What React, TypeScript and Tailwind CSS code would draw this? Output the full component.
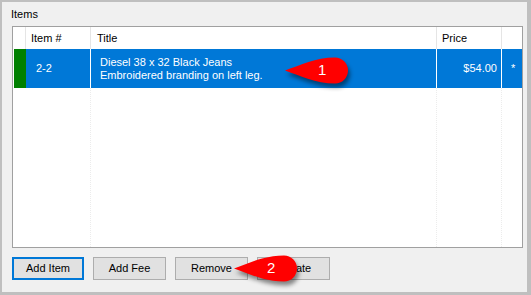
const font = { fontFamily: '"Segoe UI", "Liberation Sans", Arial, sans-serif' };

function Callout({ n, className }: { n: string; className: string }) {
  return (
    <div className={`absolute h-[27px] w-[64px] ${className}`}>
      <svg
        width="64"
        height="27"
        viewBox="0 0 64 27"
        className="absolute inset-0 overflow-visible drop-shadow-[2px_4px_2px_rgba(0,0,0,0.45)]"
      >
        <path d="M0 13.5 C 16 8, 30 0.5, 50 0.5 A 13 13 0 0 1 50 26.5 C 30 26.5, 16 19, 0 13.5 Z" fill="#ff0000" />
      </svg>
      <span className="absolute left-[33px] top-[4px] text-[15px] leading-[18px] text-white" style={{ fontFamily: '"Liberation Sans", Arial, sans-serif' }}>
        {n}
      </span>
    </div>
  );
}

function Btn({ label, focused }: { label: string; focused?: boolean }) {
  return (
    <button
      className={`h-[23px] bg-[#e1e1e1] text-[11px] text-black ${
        focused ? 'w-[72px] border-2 border-[#0078d7]' : 'w-[73px] border border-[#adadad]'
      }`}
    >
      {label}
    </button>
  );
}

export default function App() {
  return (
    <div
      className="relative h-[295px] w-[531px] border-b-[3px] border-l-2 border-r-[4px] border-t-2 border-[#bfbfbf] bg-[#f0f0f0] text-[11px] text-black"
      style={font}
    >
      <div className="pl-[9px] pt-[6px] leading-[13px]">Items</div>

      {/* list view */}
      <div className="ml-[10px] mt-[5px] flex h-[222px] w-[511px] flex-col border border-[#a0a0a0] bg-white">
        {/* header */}
        <div className="flex h-[22px] items-center">
          <div className="h-full w-[13px] border-r border-[#e5e5e5]" />
          <div className="flex h-full w-[65px] items-center border-r border-[#e5e5e5] pl-[5px]">Item #</div>
          <div className="flex h-full w-[346px] items-center border-r border-[#e5e5e5] pl-[6px]">Title</div>
          <div className="flex h-full w-[65px] items-center border-r border-[#e5e5e5] pl-[5px]">Price</div>
          <div className="h-full flex-1" />
        </div>

        {/* selected row */}
        <div className="flex h-[39px] bg-[#0078d7] text-white">
          <div className="h-full w-[13px] bg-white pl-px">
            <div className="h-full w-[12px] bg-[#008000]" />
          </div>
          <div className="flex h-full w-[65px] items-center border-r border-white pl-[10px]">2-2</div>
          <div className="flex h-full w-[346px] flex-col justify-center border-r border-white pl-[9px] leading-[13px]">
            <span>Diesel 38 x 32 Black Jeans</span>
            <span>Embroidered branding on left leg.</span>
          </div>
          <div className="flex h-full w-[65px] items-center justify-end border-r border-white pr-[4px]">$54.00</div>
          <div className="flex h-full flex-1 items-center pl-[9px]">*</div>
        </div>

        {/* empty body */}
        <div className="flex flex-1">
          <div className="w-[78px] border-r border-dotted border-[#ececec]" />
          <div className="w-[346px] border-r border-dotted border-[#ececec]" />
          <div className="w-[65px] border-r border-dotted border-[#ececec]" />
          <div className="flex-1" />
        </div>
      </div>

      {/* buttons */}
      <div className="ml-[10px] mt-[9px] flex gap-[9px]">
        <Btn label="Add Item" focused />
        <Btn label="Add Fee" />
        <Btn label="Remove" />
        <Btn label="Update" />
      </div>

      <Callout n="1" className="left-[283px] top-[55px]" />
      <Callout n="2" className="left-[232px] top-[253px]" />
    </div>
  );
}
